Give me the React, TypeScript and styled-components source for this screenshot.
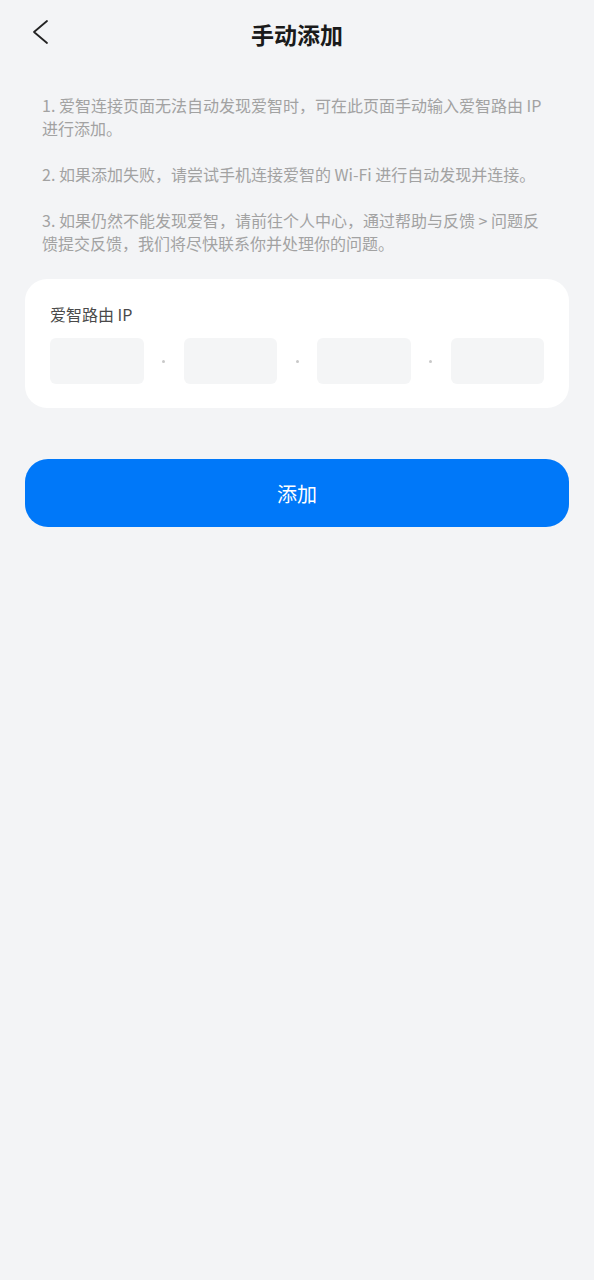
import React from "react";
import styled, { createGlobalStyle } from "styled-components";

const Global = createGlobalStyle`
  html, body { margin: 0; padding: 0; background: #f3f4f6; }
  body { font-family: "Noto Sans CJK SC", "Noto Sans", sans-serif; }
  * { box-sizing: border-box; }
`;

const Page = styled.div`
  min-height: 1280px;
  background: #f3f4f6;
  display: flex;
  flex-direction: column;
`;

const Header = styled.div`
  height: 68px;
  display: flex;
  align-items: center;
  justify-content: center;
  position: relative;
`;

const BackButton = styled.div`
  position: absolute;
  left: 28px;
  top: 16px;
  width: 24px;
  height: 32px;
  display: flex;
`;

const Title = styled.div`
  font-size: 23px;
  font-weight: 700;
  color: #1a1a1a;
  line-height: 30px;
`;

const Notes = styled.div`
  padding: 26px 42px 0;
  display: flex;
  flex-direction: column;
  gap: 23px;
`;

const Note = styled.p`
  margin: 0;
  font-size: 16px;
  line-height: 23px;
  color: #a2a2a2;
`;

const Card = styled.div`
  margin: 24px 25px 0;
  background: #ffffff;
  border-radius: 22px;
  padding: 24px 25px 24px;
`;

const Label = styled.div`
  font-size: 16px;
  line-height: 22px;
  color: #4a4a4a;
`;

const IpRow = styled.div`
  margin-top: 13px;
  display: flex;
  align-items: center;
`;

const IpInput = styled.div`
  flex: 1;
  height: 46px;
  background: #f4f5f6;
  border-radius: 6px;
`;

const Sep = styled.div`
  width: 40px;
  display: flex;
  justify-content: center;
  align-items: center;
  &::after {
    content: "";
    width: 3px;
    height: 3px;
    border-radius: 50%;
    background: #c8c8c8;
  }
`;

const AddButton = styled.button`
  margin: 51px 25px 0;
  height: 68px;
  border: none;
  border-radius: 23px;
  background: #0078f9;
  color: #ffffff;
  font-family: "Noto Sans CJK SC", "Noto Sans", sans-serif;
  font-size: 20px;
  display: flex;
  align-items: center;
  justify-content: center;
`;

export default function App() {
  return (
    <Page>
      <Global />
      <Header>
        <BackButton>
          <svg width="24" height="32" viewBox="0 0 24 32">
            <polyline
              points="19,5 6,16 19,27"
              fill="none"
              stroke="#222"
              strokeWidth="1.8"
              strokeLinecap="round"
              strokeLinejoin="round"
            />
          </svg>
        </BackButton>
        <Title>手动添加</Title>
      </Header>
      <Notes>
        <Note>1. 爱智连接页面无法自动发现爱智时，可在此页面手动输入爱智路由 IP 进行添加。</Note>
        <Note>2. 如果添加失败，请尝试手机连接爱智的 Wi-Fi 进行自动发现并连接。</Note>
        <Note>3. 如果仍然不能发现爱智，请前往个人中心，通过帮助与反馈 &gt; 问题反馈提交反馈，我们将尽快联系你并处理你的问题。</Note>
      </Notes>
      <Card>
        <Label>爱智路由 IP</Label>
        <IpRow>
          <IpInput />
          <Sep />
          <IpInput />
          <Sep />
          <IpInput />
          <Sep />
          <IpInput />
        </IpRow>
      </Card>
      <AddButton>添加</AddButton>
    </Page>
  );
}
